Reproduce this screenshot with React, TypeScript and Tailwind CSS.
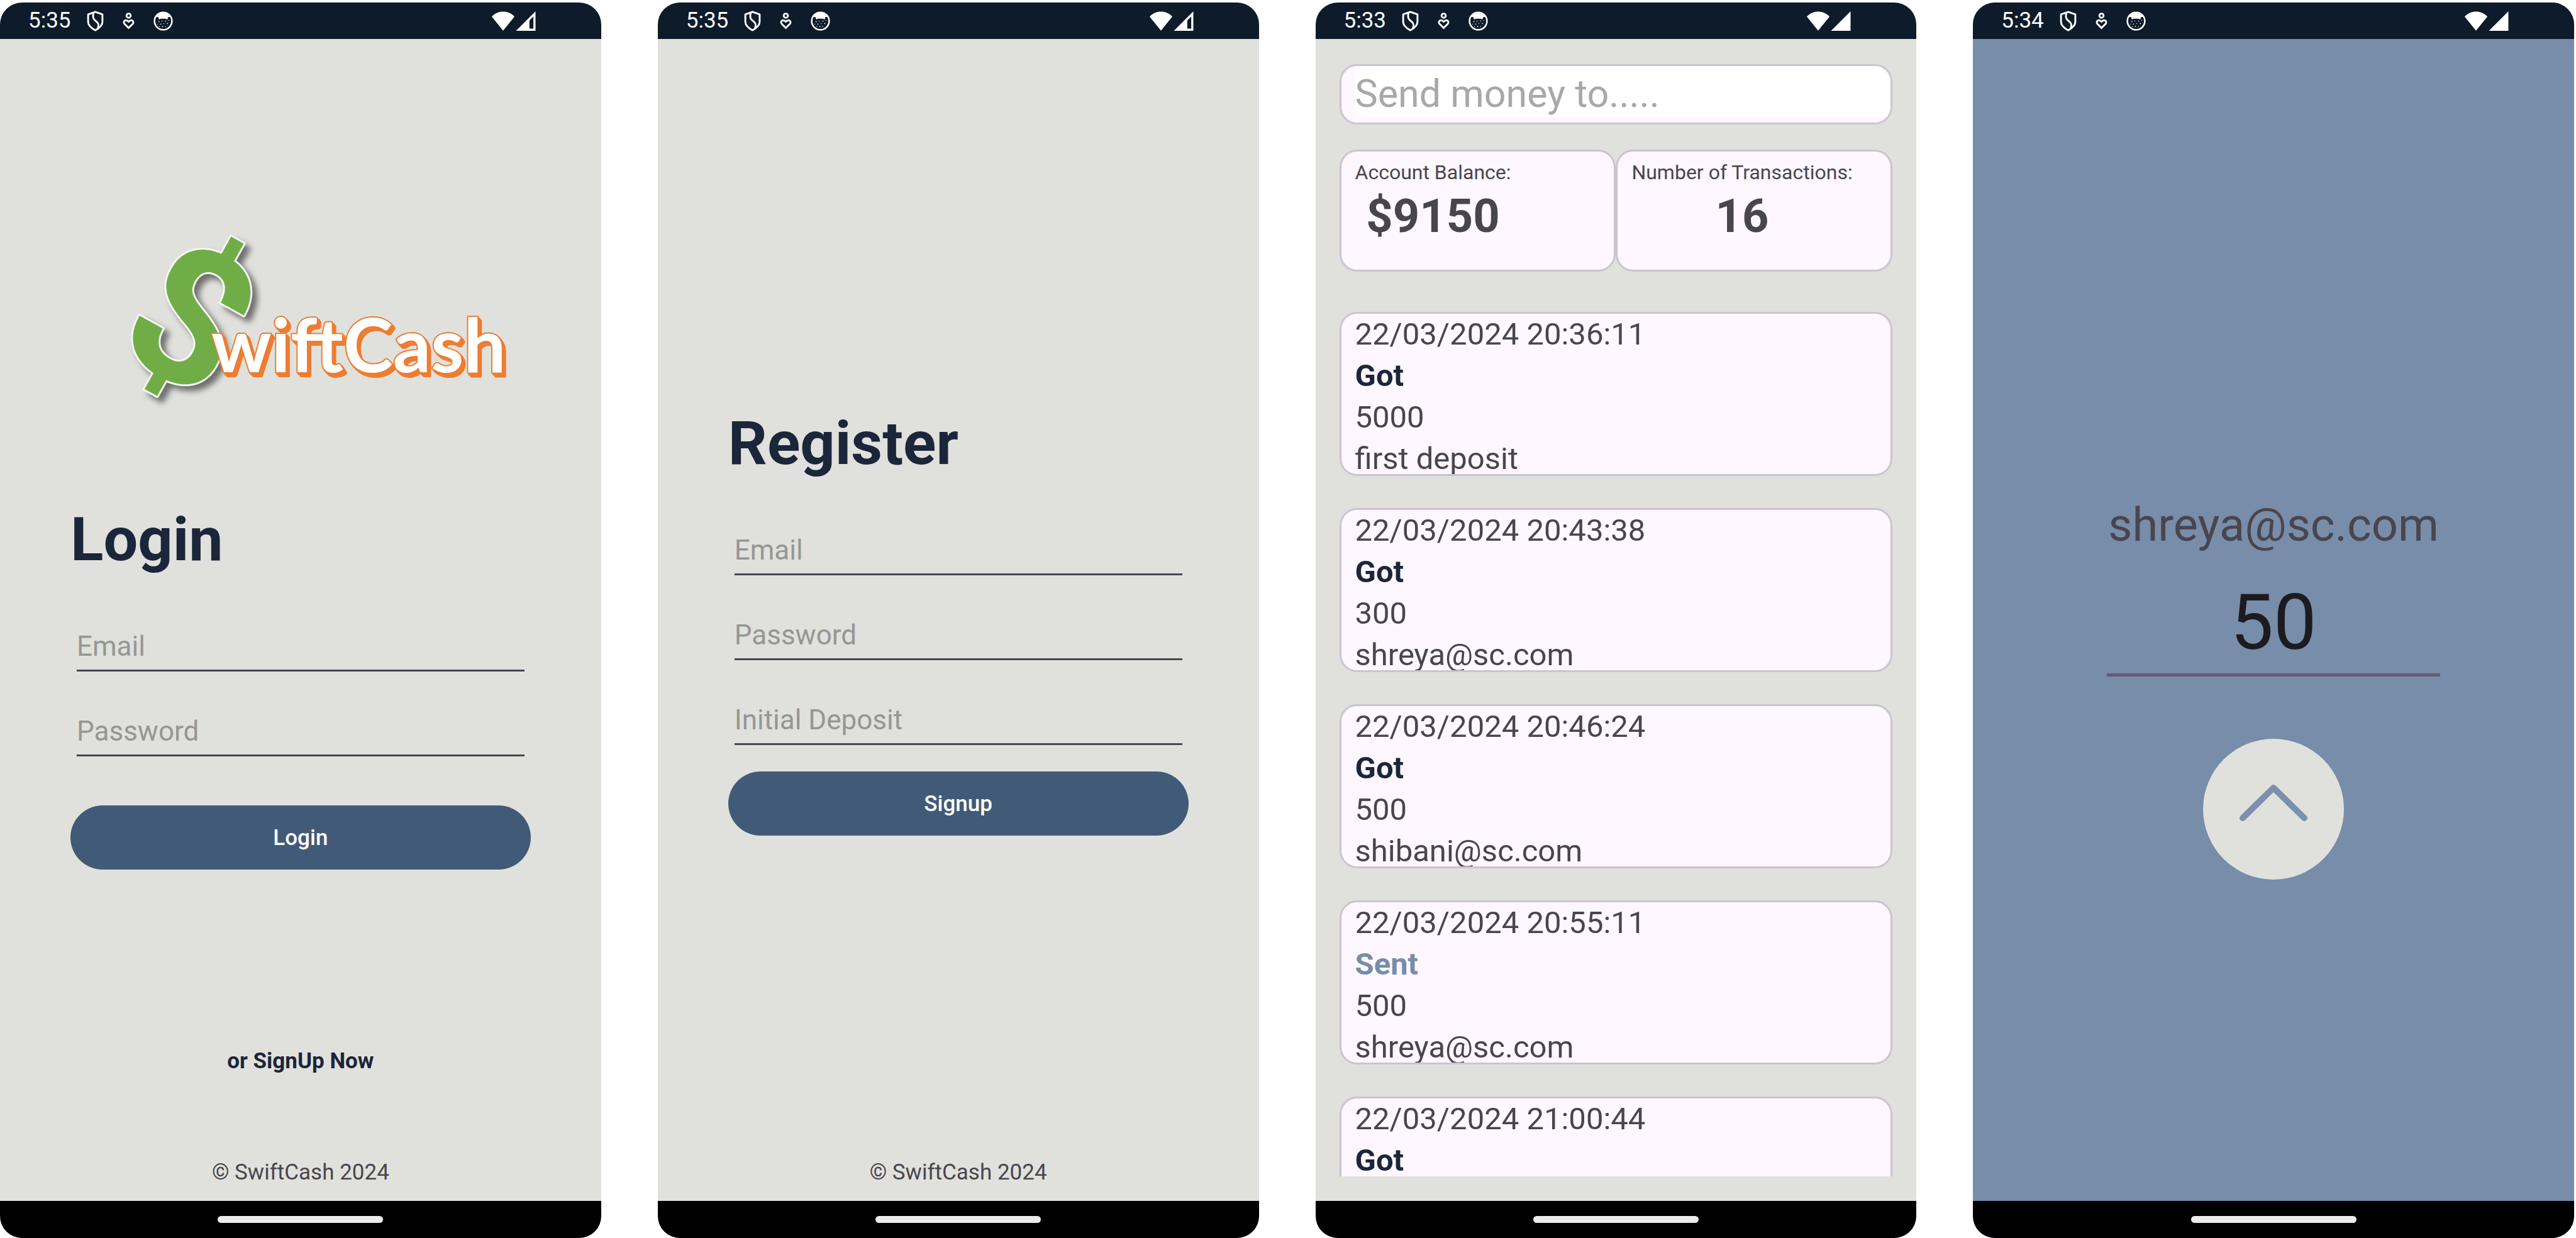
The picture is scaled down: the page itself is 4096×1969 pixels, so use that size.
import type { ReactNode } from "react";

function ShieldIcon() {
  return (
    <svg viewBox="0 0 28 34" className="h-[33px] w-[27px]" fill="none" stroke="white" strokeWidth="3" strokeLinejoin="round" aria-hidden="true">
      <path d="M14 1.8 25.8 6v12c0 6-5 10.500-11.800 14.200C7.200 28.500 2.200 24 2.200 18V6Z" />
      <path d="M11 4c-2 7 0 10 4 13s6 6 3 12" />
    </svg>
  );
}

function HeartPersonIcon() {
  return (
    <svg viewBox="0 0 20 28" className="h-[27px] w-[19px]" fill="none" stroke="white" strokeWidth="3" aria-hidden="true">
      <circle cx="10" cy="5" r="3.500" />
      <path d="M10 25.500 3 18.500c-3-4 2-8.500 7-3.500 5-5 10-.500 7 3.500Z" />
    </svg>
  );
}

function CatIcon() {
  return (
    <svg viewBox="0 0 32 32" className="h-[31px] w-[31px]" fill="none" aria-hidden="true">
      <circle cx="16" cy="16" r="14.300" stroke="white" strokeWidth="2.600" />
      <path d="M4 9C8 3 12 1.500 16 1.500S24 3 28 9l-4 .5-1 4-3-1.500h-8l-3 1.500-1-4Z" fill="white" />
      <g fill="white">
        <circle cx="9" cy="17" r=".9" />
        <circle cx="14" cy="16" r=".7" />
        <circle cx="20" cy="16" r=".9" />
        <circle cx="25" cy="15" r=".7" />
        <circle cx="7" cy="21" r=".7" />
        <circle cx="12" cy="21" r=".9" />
        <circle cx="17" cy="20" r=".7" />
        <circle cx="23" cy="20" r=".9" />
        <circle cx="10" cy="25" r=".7" />
        <circle cx="15" cy="25" r=".9" />
        <circle cx="20" cy="25" r=".7" />
      </g>
    </svg>
  );
}

function WifiIcon() {
  return (
    <svg viewBox="0 0 38 32" className="h-[31px] w-[36px]" fill="white" aria-hidden="true">
      <path d="M0 8.500C10-2.700 28-2.700 38 8.500L19 32Z" />
    </svg>
  );
}

function SignalIcon({ partial }: { partial: boolean }) {
  return (
    <svg viewBox="0 0 32 32" className="h-[31px] w-[32px]" aria-hidden="true">
      <path d="M32 0v32H0Z" fill="white" />
      {partial && <path d="M28.500 8.500v20H22V15Z" fill="#0d1b2a" />}
    </svg>
  );
}

type PhoneProps = {
  label: string;
  time: string;
  partialSignal?: boolean;
  tone?: "light" | "blue";
  children: ReactNode;
};

function Phone({ label, time, partialSignal = false, tone = "light", children }: PhoneProps) {
  return (
    <section
      aria-label={label}
      className={`flex min-w-0 flex-col overflow-hidden rounded-[35px] ${tone === "blue" ? "bg-[#778da9]" : "bg-[#e0e1dc]"}`}
    >
      <header className="flex h-[58px] shrink-0 items-center bg-[#0d1b2a] pr-[104px] pl-[45px] text-white">
        <time className="text-[35px] leading-[42px]">{time}</time>
        <div className="ml-[25px] flex items-center gap-[30px]">
          <ShieldIcon />
          <HeartPersonIcon />
          <CatIcon />
        </div>
        <div className="ml-auto flex items-center gap-[2px]">
          <WifiIcon />
          <SignalIcon partial={partialSignal} />
        </div>
      </header>
      <main className="flex min-h-0 flex-1 flex-col">{children}</main>
      <footer className="flex h-[59px] shrink-0 justify-center bg-black pt-[24px]">
        <div className="h-[11px] w-[263px] rounded-full bg-[#ececec]" />
      </footer>
    </section>
  );
}

function Logo() {
  return (
    <svg viewBox="0 0 700 288" className="mt-[300px] h-[288px] w-[700px] self-center overflow-visible" role="img" aria-label="SwiftCash">
      <g style={{ filter: "drop-shadow(8px 8px 5px rgba(0,0,0,0.5))" }}>
        <text
          x="177"
          y="247"
          textAnchor="middle"
          transform="rotate(29 177 140)"
          fontFamily="Roboto"
          fontWeight="700"
          fontSize="300"
          fill="#70ad47"
          stroke="#f4f7f1"
          strokeWidth="6"
          strokeLinejoin="round"
          paintOrder="stroke"
        >
          $
        </text>
      </g>
      <text
        x="208"
        y="230"
        fontFamily="Lato"
        fontWeight="700"
        fontSize="119"
        fill="white"
        stroke="#ed7d31"
        strokeWidth="4"
        strokeLinejoin="round"
        paintOrder="stroke"
        style={{ filter: "drop-shadow(3px 3px 0 #ed7d31) drop-shadow(2px 3px 0 #ed7d31)" }}
      >
        wiftCash
      </text>
    </svg>
  );
}

function Field({ label, type = "text" }: { label: string; type?: string }) {
  return (
    <input
      type={type}
      aria-label={label}
      placeholder={label}
      className="mx-[10px] h-[77px] min-w-0 border-b-[3px] border-[#49454f] bg-transparent text-[44px] text-[#1c1b1f] outline-none placeholder:text-[#969695]"
    />
  );
}

function Title({ children }: { children: ReactNode }) {
  return <h1 className="mb-[76px] text-[97px] leading-[114px] font-bold text-[#1b263b]">{children}</h1>;
}

function PillButton({ children }: { children: ReactNode }) {
  return (
    <button type="button" className="h-[102px] rounded-full bg-[#415a77] pt-[2px] text-[35px] font-medium text-white">
      {children}
    </button>
  );
}

function Copyright() {
  return <p className="mt-auto mb-[25px] text-center text-[35px] leading-[40px] text-[#49454f]">© SwiftCash 2024</p>;
}

const card = "overflow-hidden rounded-[28px] border-[3px] border-[#cac4d0] bg-[#fef7ff]";

function Stat({ label, value }: { label: string; value: string }) {
  return (
    <div className={`${card} h-[194px] pt-[14px] pl-[22px]`}>
      <dl className="inline-flex flex-col items-center text-[#49454f]">
        <dt className="text-[32px] leading-[38px]">{label}</dt>
        <dd className="mt-[8px] text-[74px] leading-[86px] font-bold">{value}</dd>
      </dl>
    </div>
  );
}

const transactions = [
  { date: "22/03/2024 20:36:11", kind: "Got", amount: "5000", party: "first deposit" },
  { date: "22/03/2024 20:43:38", kind: "Got", amount: "300", party: "shreya@sc.com" },
  { date: "22/03/2024 20:46:24", kind: "Got", amount: "500", party: "shibani@sc.com" },
  { date: "22/03/2024 20:55:11", kind: "Sent", amount: "500", party: "shreya@sc.com" },
  { date: "22/03/2024 21:00:44", kind: "Got", amount: "500", party: "shreya@sc.com" },
];

export default function App() {
  return (
    <div className="grid min-h-screen grid-cols-4 gap-[90px] bg-white pt-[4px] pr-[3px] font-[Roboto,sans-serif]">
      <Phone label="Login" time="5:35" partialSignal>
        <Logo />
        <form className="mt-[151px] flex flex-col px-[112px]">
          <Title>Login</Title>
          <div className="flex flex-col gap-[58px]">
            <Field label="Email" type="email" />
            <Field label="Password" type="password" />
          </div>
          <div className="mt-[78px] flex flex-col">
            <PillButton>Login</PillButton>
          </div>
        </form>
        <a href="#signup" className="mt-[285px] self-center text-[35px] leading-[40px] font-bold text-[#1b263b]">
          or SignUp Now
        </a>
        <Copyright />
      </Phone>

      <Phone label="Register" time="5:35" partialSignal>
        <form className="mt-[586px] flex flex-col px-[112px]">
          <Title>Register</Title>
          <div className="flex flex-col gap-[58px]">
            <Field label="Email" type="email" />
            <Field label="Password" type="password" />
            <Field label="Initial Deposit" />
          </div>
          <div className="mt-[42px] flex flex-col">
            <PillButton>Signup</PillButton>
          </div>
        </form>
        <Copyright />
      </Phone>

      <Phone label="Account" time="5:33">
        <div className="flex flex-col px-[38px] pt-[40px] pb-[39px]">
          <div className={`${card} flex h-[96px] pb-[8px] pl-[22px]`}>
            <input
              type="text"
              aria-label="Send money to"
              placeholder="Send money to....."
              className="min-w-0 flex-1 bg-white pt-[8px] text-[61px] text-[#1c1b1f] outline-none placeholder:text-[#a8a8a8]"
            />
          </div>
          <div className="mt-[40px] grid grid-cols-2">
            <Stat label="Account Balance:" value="$9150" />
            <Stat label="Number of Transactions:" value="16" />
          </div>
          <ul className="mt-[64px] flex h-[1375px] flex-col gap-[51px] overflow-hidden">
            {transactions.map((t) => (
              <li key={t.date} className={`${card} h-[261px] shrink-0 pl-[22px] text-[49px] leading-[66px] text-[#49454f]`}>
                <p>{t.date}</p>
                <p className={`font-bold ${t.kind === "Sent" ? "text-[#778da9]" : "text-[#1b263b]"}`}>{t.kind}</p>
                <p>{t.amount}</p>
                <p>{t.party}</p>
              </li>
            ))}
          </ul>
        </div>
      </Phone>

      <Phone label="Send money" time="5:34" tone="blue">
        <div className="flex flex-col items-center pt-[729px]">
          <p className="text-[74px] leading-[88px] text-[#49454f]">shreya@sc.com</p>
          <input
            type="text"
            aria-label="Amount"
            defaultValue="50"
            className="mt-[30px] h-[167px] w-[530px] border-b-[5px] border-[#655d75] bg-transparent text-center text-[122px] text-[#1c1b1f] outline-none"
          />
          <button type="button" aria-label="Send" className="mt-[99px] rounded-full bg-[#e0e1dc]">
            <svg viewBox="0 0 224 224" className="h-[224px] w-[224px]" fill="none" stroke="#7b90ad" strokeWidth="10" strokeLinecap="round" strokeLinejoin="round" aria-hidden="true">
              <path d="M63 126 112 78l49 48" />
            </svg>
          </button>
        </div>
      </Phone>
    </div>
  );
}
